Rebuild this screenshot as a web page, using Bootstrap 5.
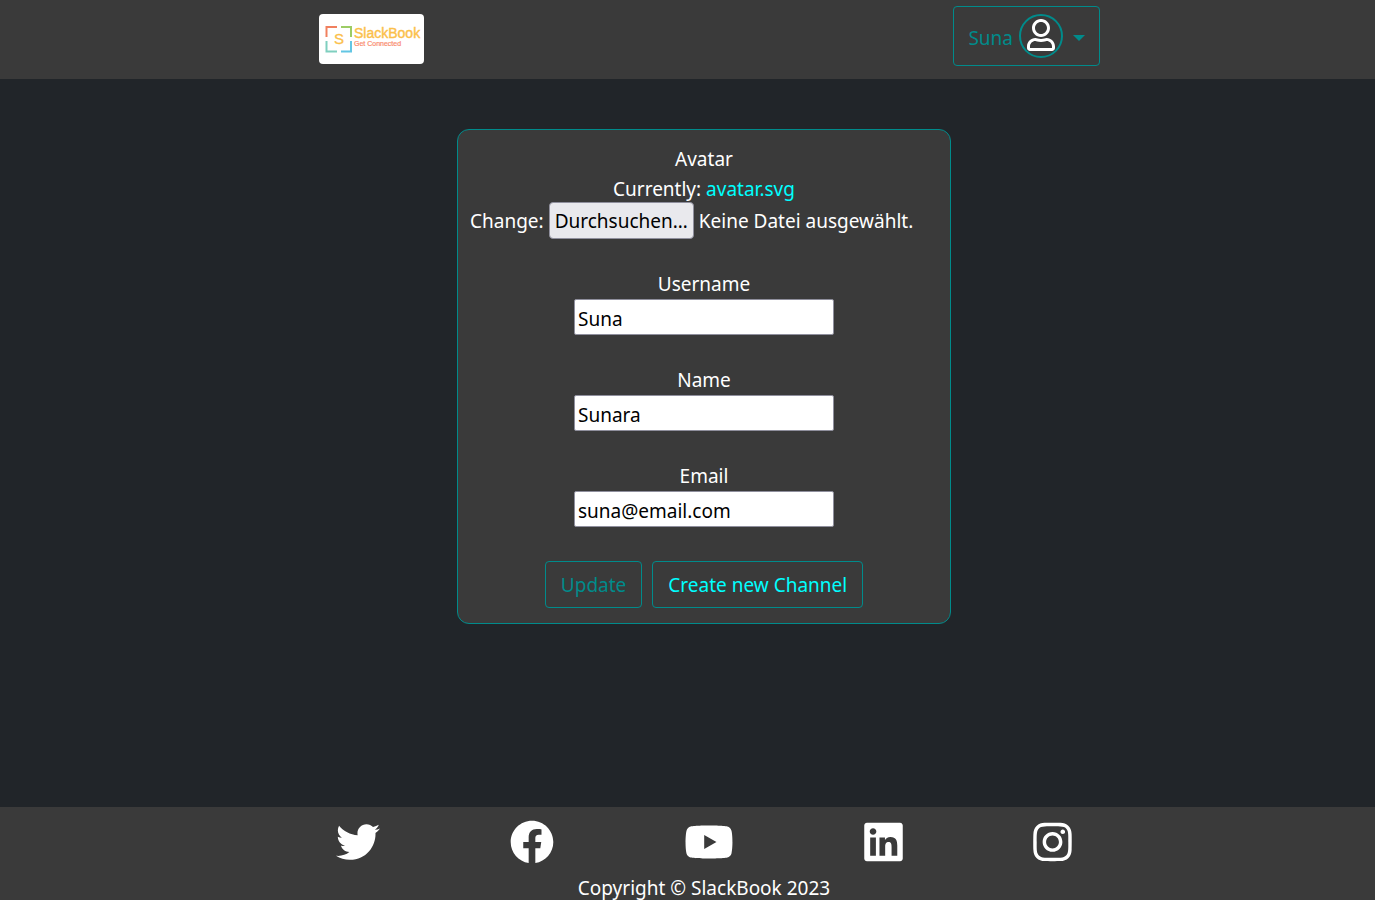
<!DOCTYPE html>
<html lang="en">
<head>
<meta charset="utf-8">
<meta name="viewport" content="width=device-width, initial-scale=1">
<title>SlackBook – Profile</title>
<link href="https://cdn.jsdelivr.net/npm/bootstrap@5.3.0/dist/css/bootstrap.min.css" rel="stylesheet">
<style>
  body {
    background: #212529;
    color: #fff;
    font-family: "Noto Sans", "Open Sans", sans-serif;
    font-size: 19px;
    line-height: 30px;
  }
  .site-bar { background: #3a3a3a; }
  .site-header { padding: 6px 0 13px 44px; }
  .header-inner { max-width: 781px; }
  .site-main, .site-footer { padding-left: 33px; }
  .brand-link { padding-top: 8px; }
  .site-logo { border-radius: 4px; background: #fff; }
  .btn-teal {
    --bs-btn-color: #008b8b;
    --bs-btn-border-color: #008b8b;
    --bs-btn-hover-color: #fff;
    --bs-btn-hover-border-color: #008b8b;
    --bs-btn-hover-bg: #008b8b;
    --bs-btn-font-size: 19px;
    --bs-btn-line-height: 31px;
    --bs-btn-padding-x: 15px;
    --bs-btn-border-radius: 4px;
    padding-top: 8px;
    padding-bottom: 6px;
  }
  .btn-aqua { --bs-btn-color: #00ffff; }
  .user-toggle { height: 60px; padding: 7px 14px; }
  .user-name { padding-top: 4px; }
  .user-toggle::after {
    margin: 4px 0 0 10px;
    border-width: 6px 6px 0;
  }
  .avatar-ring {
    width: 44px;
    height: 44px;
    padding-top: 3px;
    margin-left: 6px;
    border: 2px solid #008b8b;
    border-radius: 50%;
    color: #fff;
  }
  .profile-card {
    max-width: 494px;
    margin-top: 50px;
    padding: 14px 12px 15px;
    background: #3a3a3a;
    border: 1px solid #008b8b;
    border-radius: 12px;
  }
  .file-link { color: #00ffff; }
  .browse-btn {
    height: 37px;
    padding: 0 5px;
    background: #e9e9ed;
    border: 1px solid #8f8f9d;
    border-radius: 4px;
    color: #000;
  }
  .file-row { margin: -2px 0 31px; gap: 5px; }
  .field-group { margin-bottom: 31px; }
  .field-group label { line-height: 29px; }
  .field-input {
    width: 260px;
    max-width: 100%;
    height: 36px;
    padding: 3px 3px 0;
    border: 1px solid #8f8f9d;
    border-radius: 2px;
    background: #fff;
    color: #000;
  }
  .form-actions { gap: 10px; padding-top: 3px; }
  .social-row { max-width: 736px; padding-top: 13px; }
  .copyright { padding-top: 12px; line-height: 24px; }
</style>
</head>
<body class="d-flex flex-column min-vh-100">

<header class="site-bar site-header">
  <div class="header-inner mx-auto d-flex justify-content-between align-items-start">
    <a href="#" class="brand-link d-flex" aria-label="SlackBook home">
      <svg class="site-logo" width="105" height="50" viewBox="0 0 105 50" font-family="Liberation Sans, Arial, sans-serif">
        <g fill="none" stroke-width="2">
          <path d="M7.500 23V13H18" stroke="#f0805f"/>
          <path d="M22 13H32V23" stroke="#9ccc65"/>
          <path d="M7.500 27V37.500H18" stroke="#7fcfbf"/>
          <path d="M22 37.500H32V27" stroke="#62c6e4"/>
        </g>
        <text x="15" y="30" font-size="15" fill="#fbc04a" stroke="#fbc04a" stroke-width=".3">S</text>
        <text x="35" y="24" font-size="14" fill="#fbc04a" stroke="#fbc04a" stroke-width=".4">SlackBook</text>
        <text x="35" y="32" font-size="7" fill="#f98a6c" stroke="#f98a6c" stroke-width=".2">Get Connected</text>
      </svg>
    </a>
    <div class="dropdown">
      <button type="button" class="btn btn-teal user-toggle dropdown-toggle d-flex align-items-center" data-bs-toggle="dropdown" aria-expanded="false">
        <span class="user-name">Suna</span>
        <span class="avatar-ring d-flex align-items-start justify-content-center">
          <svg width="28" height="32" viewBox="0 0 448 512" fill="currentColor" aria-hidden="true"><path d="M313.6 304c-28.7 0-42.5 16-89.6 16-47.1 0-60.8-16-89.6-16C60.2 304 0 364.2 0 438.4V464c0 26.5 21.5 48 48 48h352c26.5 0 48-21.5 48-48v-25.6c0-74.2-60.2-134.4-134.4-134.4zM400 464H48v-25.6c0-47.6 38.8-86.4 86.4-86.4 14.6 0 38.3 16 89.6 16 51.7 0 74.9-16 89.6-16 47.6 0 86.4 38.8 86.4 86.4V464zM224 288c79.5 0 144-64.5 144-144S303.5 0 224 0 80 64.5 80 144s64.5 144 144 144zm0-240c52.9 0 96 43.1 96 96s-43.1 96-96 96-96-43.1-96-96 43.1-96 96-96z"/></svg>
        </span>
      </button>
    </div>
  </div>
</header>

<main class="site-main flex-grow-1">
  <form class="profile-card mx-auto text-center">
    <label for="avatar" class="d-block">Avatar</label>
    <div>Currently: <a href="#" class="file-link text-decoration-none">avatar.svg</a></div>
    <div class="file-row d-flex align-items-center">
      <span>Change:</span>
      <button type="button" class="browse-btn" onclick="document.getElementById('avatar').click()">Durchsuchen…</button>
      <span>Keine Datei ausgewählt.</span>
      <input type="file" id="avatar" name="avatar" class="d-none">
    </div>
    <div class="field-group">
      <label for="username" class="d-block">Username</label>
      <input type="text" id="username" class="field-input d-block mx-auto" value="Suna">
    </div>
    <div class="field-group">
      <label for="name" class="d-block">Name</label>
      <input type="text" id="name" class="field-input d-block mx-auto" value="Sunara">
    </div>
    <div class="field-group">
      <label for="email" class="d-block">Email</label>
      <input type="email" id="email" class="field-input d-block mx-auto" value="suna@email.com">
    </div>
    <div class="form-actions d-flex justify-content-center">
      <button type="submit" class="btn btn-teal">Update</button>
      <a href="#" class="btn btn-teal btn-aqua">Create new Channel</a>
    </div>
  </form>
</main>

<footer class="site-bar site-footer text-center">
  <div class="social-row mx-auto d-flex justify-content-between">
    <a href="#" class="d-flex text-white" aria-label="Twitter"><svg width="44" height="44" viewBox="0 0 512 512" fill="currentColor"><path d="M459.37 151.716c.325 4.548.325 9.097.325 13.645 0 138.72-105.583 298.558-298.558 298.558-59.452 0-114.68-17.219-161.137-47.106 8.447.974 16.568 1.299 25.34 1.299 49.055 0 94.213-16.568 130.274-44.832-46.132-.975-84.792-31.188-98.112-72.772 6.498.974 12.995 1.624 19.818 1.624 9.421 0 18.843-1.3 27.614-3.573-48.081-9.747-84.143-51.98-84.143-102.985v-1.299c13.969 7.797 30.214 12.67 47.431 13.319-28.264-18.843-46.781-51.005-46.781-87.391 0-19.492 5.197-37.36 14.294-52.954 51.655 63.675 129.3 105.258 216.365 109.807-1.624-7.797-2.599-15.918-2.599-24.04 0-57.828 46.782-104.934 104.934-104.934 30.213 0 57.502 12.67 76.67 33.137 23.715-4.548 46.456-13.32 66.599-25.34-7.798 24.366-24.366 44.833-46.132 57.827 21.117-2.273 41.584-8.122 60.426-16.243-14.292 20.791-32.161 39.308-52.628 54.253z"/></svg></a>
    <a href="#" class="d-flex text-white" aria-label="Facebook"><svg width="44" height="44" viewBox="0 0 512 512" fill="currentColor"><path d="M504 256C504 119 393 8 256 8S8 119 8 256c0 123.78 90.69 226.38 209.25 245V327.69h-63V256h63v-54.64c0-62.15 37-96.48 93.67-96.48 27.14 0 55.52 4.84 55.52 4.84v61h-31.28c-30.8 0-40.41 19.12-40.41 38.73V256h68.78l-11 71.69h-57.78V501C413.31 482.38 504 379.78 504 256z"/></svg></a>
    <a href="#" class="d-flex text-white" aria-label="YouTube"><svg width="50" height="44" viewBox="0 0 576 512" fill="currentColor"><path d="M549.655 124.083c-6.281-23.65-24.787-42.276-48.284-48.597C458.781 64 288 64 288 64S117.22 64 74.629 75.486c-23.497 6.322-42.003 24.947-48.284 48.597-11.412 42.867-11.412 132.305-11.412 132.305s0 89.438 11.412 132.305c6.281 23.65 24.787 41.5 48.284 47.821C117.22 448 288 448 288 448s170.78 0 213.371-11.486c23.497-6.321 42.003-24.171 48.284-47.821 11.412-42.867 11.412-132.305 11.412-132.305s0-89.438-11.412-132.305zm-317.51 213.508V175.185l142.739 81.205-142.739 81.201z"/></svg></a>
    <a href="#" class="d-flex text-white" aria-label="LinkedIn"><svg width="39" height="44" viewBox="0 0 448 512" fill="currentColor"><path d="M416 32H31.9C14.3 32 0 46.5 0 64.3v383.4C0 465.5 14.3 480 31.9 480H416c17.6 0 32-14.5 32-32.3V64.3c0-17.8-14.4-32.3-32-32.3zM135.4 416H69V202.2h66.5V416zm-33.2-243c-21.3 0-38.5-17.3-38.5-38.5S80.9 96 102.2 96c21.2 0 38.5 17.3 38.5 38.5 0 21.3-17.2 38.5-38.5 38.5zm282.1 243h-66.4V312c0-24.8-.5-56.7-34.5-56.7-34.6 0-39.9 27-39.9 54.9V416h-66.4V202.2h63.7v29.2h.9c8.9-16.8 30.6-34.5 62.9-34.5 67.2 0 79.7 44.3 79.7 101.9V416z"/></svg></a>
    <a href="#" class="d-flex text-white" aria-label="Instagram"><svg width="39" height="44" viewBox="0 0 448 512" fill="currentColor"><path d="M224.1 141c-63.6 0-114.9 51.3-114.9 114.9s51.3 114.9 114.9 114.9S339 319.5 339 255.9 287.7 141 224.1 141zm0 189.6c-41.1 0-74.7-33.5-74.7-74.7s33.5-74.7 74.7-74.7 74.7 33.5 74.7 74.7-33.6 74.7-74.7 74.7zm146.4-194.3c0 14.9-12 26.8-26.8 26.8-14.9 0-26.8-12-26.8-26.8s12-26.8 26.8-26.8 26.8 12 26.8 26.8zm76.1 27.2c-1.7-35.9-9.9-67.7-36.2-93.9-26.2-26.2-58-34.4-93.9-36.2-37-2.1-147.9-2.1-184.9 0-35.8 1.7-67.6 9.9-93.9 36.1s-34.4 58-36.2 93.9c-2.1 37-2.1 147.9 0 184.9 1.7 35.9 9.9 67.7 36.2 93.9s58 34.4 93.9 36.2c37 2.1 147.9 2.1 184.9 0 35.9-1.7 67.7-9.9 93.9-36.2 26.2-26.2 34.4-58 36.2-93.9 2.1-37 2.1-147.8 0-184.8zM398.8 388c-7.8 19.6-22.9 34.7-42.6 42.6-29.5 11.7-99.5 9-132.1 9s-102.7 2.6-132.1-9c-19.6-7.8-34.7-22.9-42.6-42.6-11.7-29.5-9-99.5-9-132.1s-2.6-102.7 9-132.1c7.8-19.6 22.9-34.7 42.6-42.6 29.5-11.7 99.5-9 132.1-9s102.7-2.6 132.1 9c19.6 7.8 34.7 22.9 42.6 42.6 11.7 29.5 9 99.5 9 132.1s2.7 102.7-9 132.1z"/></svg></a>
  </div>
  <div class="copyright">Copyright © SlackBook 2023</div>
</footer>

<script src="https://cdn.jsdelivr.net/npm/bootstrap@5.3.0/dist/js/bootstrap.bundle.min.js"></script>
</body>
</html>
